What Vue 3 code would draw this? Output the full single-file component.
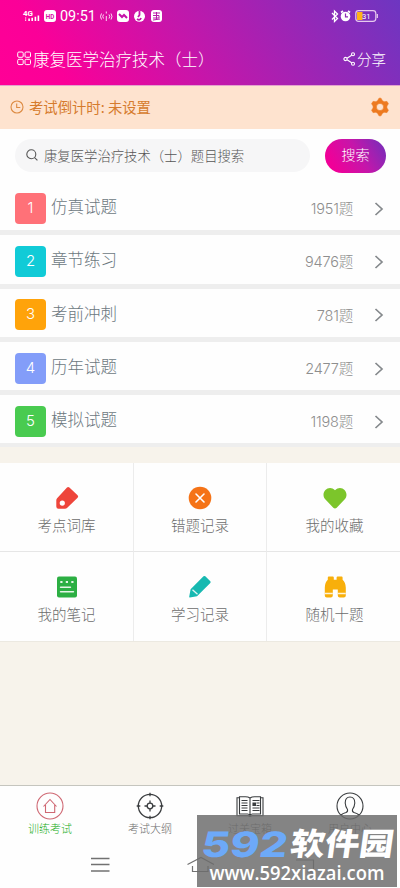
<script setup>
const rows = [
  { n: 1, name: '仿真试题', count: 1951, tone: 'red' },
  { n: 2, name: '章节练习', count: 9476, tone: 'cyan' },
  { n: 3, name: '考前冲刺', count: 781, tone: 'amber' },
  { n: 4, name: '历年试题', count: 2477, tone: 'blue' },
  { n: 5, name: '模拟试题', count: 1198, tone: 'green' },
]
const tools = [
  { id: 'tag', name: '考点词库' },
  { id: 'wrong', name: '错题记录' },
  { id: 'heart', name: '我的收藏' },
  { id: 'note', name: '我的笔记' },
  { id: 'pencil', name: '学习记录' },
  { id: 'binoculars', name: '随机十题' },
]
const tabs = [
  { id: 'home', name: '训练考试' },
  { id: 'target', name: '考试大纲' },
  { id: 'book', name: '过关宝箱' },
  { id: 'user', name: '用户中心' },
]
</script>

<template>
  <div class="screen">
    <header class="header">
      <svg class="status" width="400" height="32" viewBox="0 0 400 32">
        <g fill="#fff">
          <text x="23" y="15.5" font-size="7" font-weight="700" textLength="10" lengthAdjust="spacingAndGlyphs">4G</text>
          <path d="M25 17.500h1.200v1h-1.200zM25 19.500h1.200v1.200h-1.200zM28.300 18.500h1.600v2.500h-1.600zM31.400 17.800h1.600v3.200h-1.600zM34.600 16.800h1.600v4.200h-1.600zM37.600 15.500h1.600v5.500h-1.600z" />
          <rect x="44" y="10" width="12" height="12" rx="3" />
          <text x="60" y="21.300" font-size="14.500" textLength="36" lengthAdjust="spacingAndGlyphs">09:51</text>
          <rect x="117" y="10" width="12" height="12" rx="3" />
          <circle cx="139.500" cy="16.300" r="5.500" />
          <rect x="151" y="10" width="11" height="12" rx="3" />
        </g>
        <text x="45.800" y="18.800" font-size="7" font-weight="700" fill="#d90ba4" textLength="8.500" lengthAdjust="spacingAndGlyphs">HD</text>
        <g fill="none" stroke="#fff" stroke-width="1">
          <path d="M103.500 14.500q-1.500 2 0 4M109 14.500q1.500 2 0 4M101.500 13.500q-2 3 0 6M111 13.500q2 3 0 6M106.300 11.500v2M106.300 16v5" opacity=".85" />
          <path d="M332 13l5.500 5.500-3 3v-10.500l3 3-5.500 5.500" stroke-width="1.300" />
        </g>
        <path d="M119 14l3 3 2-2 3 3" fill="none" stroke="#c513a8" stroke-width="2" />
        <path d="M139.500 11v4l-1.500 2M137 19q3 2 4-1" fill="none" stroke="#c513a8" stroke-width="1.800" />
        <path d="M153 13h7M153 15.500h6v2.500h-6M156.500 12v7M153 20l7-1" fill="none" stroke="#b71aa9" stroke-width="1" />
        <circle cx="345.500" cy="16.500" r="4.800" fill="#fff" />
        <path d="M341 12.500l2-1.500M350 12.500l-2-1.500" stroke="#fff" stroke-width="1.700" />
        <path d="M345.500 13.500v3.300h2.500" fill="none" stroke="#8e2bb4" stroke-width="1.200" />
        <rect x="355.800" y="10.700" width="20" height="10.600" rx="2.800" fill="none" stroke="#e6c9ee" stroke-width="1.200" />
        <path d="M357 12h5.500v8h-5.500z" fill="#ffb214" />
        <path d="M377.300 14v4" stroke="#e6c9ee" stroke-width="1.300" />
        <text x="362" y="19" font-size="8" fill="#fff" textLength="8.500" lengthAdjust="spacingAndGlyphs">31</text>
      </svg>
      <div class="title-bar">
        <svg class="grid-icon" width="16" height="15" viewBox="0 0 16 15" fill="none" stroke="#fff" stroke-width="1">
          <rect x=".7" y="1" width="5.500" height="5.300" rx="1.200" /><rect x="8" y="1" width="5.500" height="5.300" rx="1.200" />
          <rect x=".7" y="8.300" width="5.500" height="5.300" rx="1.200" /><rect x="8" y="8.300" width="5.500" height="5.300" rx="1.200" />
        </svg>
        <span class="title">康复医学治疗技术（士）</span>
        <span class="share">
          <svg width="14" height="14" viewBox="0 0 14 14" fill="none" stroke="#fff" stroke-width="1.100">
            <circle cx="2.500" cy="7" r="1.600" /><circle cx="10" cy="2.300" r="1.500" /><circle cx="10" cy="11.700" r="1.500" />
            <path d="M4 6.200l4.700-3M4 7.800l4.700 3" />
          </svg>
          分享
        </span>
      </div>
    </header>

    <div class="notice">
      <svg width="14" height="14" viewBox="0 0 14 14" fill="none" stroke="#dd8b43" stroke-width="1.100">
        <circle cx="7" cy="7" r="6" /><path d="M6.700 3.500v4h3.600" />
      </svg>
      <span>考试倒计时: 未设置</span>
      <svg class="gear" width="20" height="20" viewBox="0 0 20 20">
        <path fill="#ed7a20" fill-rule="evenodd" stroke="#ed7a20" stroke-width=".6" stroke-linejoin="round" d="M9 1.200h2l1.400 2.500 1.700 1 2.900-.3 1.400 2.400-1.500 2.200v2l1.500 2.200-1.400 2.400-2.900-.3-1.700 1-1.400 2.500h-2l-1.400-2.500-1.700-1-2.900.3-1.400-2.400 1.500-2.200v-2l-1.500-2.200 1.400-2.400 2.900.3 1.700-1zM10 6.400a3.600 3.600 0 1 0 0 7.200a3.600 3.600 0 1 0 0-7.200z" />
      </svg>
    </div>

    <div class="search">
      <div class="field">
        <svg width="12" height="12" viewBox="0 0 12 12" fill="none" stroke="#555" stroke-width="1.100">
          <circle cx="5.300" cy="5.300" r="4.500" /><path d="M8.600 8.600l2.800 2.800" />
        </svg>
        <span>康复医学治疗技术（士）题目搜索</span>
      </div>
      <div class="button">搜索</div>
    </div>

    <div class="list">
      <div v-for="r in rows" :key="r.n" class="row">
        <span class="badge" :class="r.tone">{{ r.n }}</span>
        <span class="name">{{ r.name }}</span>
        <span class="count">{{ r.count }}题</span>
        <svg width="10" height="14" viewBox="0 0 10 14" fill="none" stroke="#85898c" stroke-width="1.700">
          <path d="M1.500 1l6.500 6-6.500 6" />
        </svg>
      </div>
    </div>

    <div class="tools">
      <div v-for="t in tools" :key="t.id" class="tool">
        <svg width="26" height="26" viewBox="0 0 26 26">
          <path v-if="t.id === 'tag'" fill="#ee453b" fill-rule="evenodd" d="M13 2.500q1.200-1 2.400 0l8.200 7.700q1.200 1.300 0 2.500l-10.600 10.300q-.8.800-2 .8h-6.500q-2.200 0-2.200-2.200v-6.500q0-1.100.8-1.900zM8.300 15.500a2.600 2.600 0 1 0 0 5.200a2.600 2.600 0 1 0 0-5.200z" />
          <template v-else-if="t.id === 'wrong'">
            <circle cx="13" cy="13" r="11.300" fill="#f57317" />
            <path d="M9 9l8 8M17 9l-8 8" stroke="#fff" stroke-width="1.600" stroke-linecap="round" />
          </template>
          <path v-else-if="t.id === 'heart'" fill="#7cc52b" d="M13 23.500q-.9 0-1.700-.8l-8.300-8.600c-5-6.500 3.500-15.400 10-8.900c6.500-6.500 15 2.400 10 8.900l-8.300 8.600q-.8.800-1.700.8z" />
          <template v-else-if="t.id === 'note'">
            <rect x="3" y="2.500" width="20" height="21" rx="2" fill="#2caf43" />
            <path d="M6.300 8h2.200M11.800 8h2.200M17.300 8h2.200" stroke="#e5f5e7" stroke-width="2" />
            <path d="M6.500 13.200h10M6.500 17.800h13" stroke="#e5f5e7" stroke-width="1.400" stroke-linecap="round" />
          </template>
          <template v-else-if="t.id === 'pencil'">
            <path fill="#17b9b1" d="M16.500 2.300q1-.8 1.800 0l5 5q.8.800 0 1.700l-13.300 13.200-7.200 1.300q-.8 0-.6-.8l1.400-7.400z" />
            <path d="M5.500 15.800l5 4.500" stroke="#e1f6f4" stroke-width="1.300" />
          </template>
          <template v-else>
            <path fill="#f8af0b" d="M5.800 3.500q0-1 1-1h4q1 0 1 1v2.300h2.800v-2.300q0-1 1-1h4q1 0 1 1v2.200q3 2.500 3.200 8v7.800q0 2-2 2h-4q-2 0-2-2v-6h-5v6q0 2-2 2h-4q-2 0-2-2v-7.800q.1-5.500 3-8z" />
            <path d="M2.800 19.500h8M15.800 19.500h8" stroke="#fff4d8" stroke-width="1.500" />
          </template>
        </svg>
        <span>{{ t.name }}</span>
      </div>
    </div>

    <div class="spacer"></div>

    <nav class="tabs">
      <div v-for="t in tabs" :key="t.id" class="tab" :class="{ active: t.id === 'home' }">
        <svg width="28" height="28" viewBox="0 0 28 28" fill="none" stroke="#3a3d3f" stroke-width="1.100">
          <g v-if="t.id === 'home'" stroke="#cf6873">
            <circle cx="14" cy="14" r="13" /><path d="M7.500 14.500l6.500-7 6.500 7M9.500 13v7.500h9.200v-7.500" />
          </g>
          <g v-else-if="t.id === 'target'" stroke-width="1.300">
            <circle cx="14" cy="14" r="11.700" /><circle cx="14" cy="14" r="2.800" />
            <path d="M14 .7v3.600M14 23.700v3.600M.7 14h3.600M23.700 14h3.600M14 8.500v2.500M14 17v2.500M8.500 14h2.500M17 14h2.500" />
          </g>
          <g v-else-if="t.id === 'book'" stroke-width="1.100">
            <path d="M14 6q-2-1.400-5-1.300h-5.500v1h-2.500v18h11l2 .8 2-.8h11v-18h-2.500v-1h-5.500q-3-.1-5 1.300v18M3.500 6v16h8q1.500 0 2.500 1.300 1-1.300 2.500-1.300h8v-16" />
            <path d="M5.500 8.500h6M5.500 11h6M5.500 13.500h6M5.500 16h6M5.500 18.500h6M16.500 8.500h7M20.500 11h3M20.500 13.500h3M16.500 16h7M16.500 18.500h7" />
            <path d="M17 11h2.500v2.500h-2.500z" fill="#3a3d3f" />
          </g>
          <g v-else stroke-width="1.100">
            <circle cx="14" cy="14" r="13" />
            <path d="M5 23q1.500-1.500 5-2.500 2-.8 1.500-3-2-2.500-2.300-6.500 0-6 4.800-6t4.800 6q-.3 4-2.300 6.500-.5 2.200 1.500 3 3.500 1 5 2.500" />
          </g>
        </svg>
        <span>{{ t.name }}</span>
      </div>
    </nav>

    <div class="system-nav">
      <svg width="400" height="45" viewBox="0 0 400 45" fill="none" stroke="#717171" stroke-width="1.500">
        <path d="M91 15.500h18.500M91 21.500h18.500M91 28h18.500" />
        <path d="M187.500 21.500l13.500-7 13 7M192.500 23v5.500h15.500v-5.500" stroke-width="1.200" />
        <path d="M296 17h17.500v12h-6" stroke-width="1.200" />
      </svg>
    </div>

    <div class="watermark">
      <svg width="200" height="72" viewBox="0 0 200 72">
        <g transform="skewX(-8)">
          <text class="brand-num" x="9" y="42" font-size="35" textLength="86" lengthAdjust="spacingAndGlyphs">592</text>
          <text class="brand-name" x="98" y="40" font-size="31" textLength="103" lengthAdjust="spacingAndGlyphs">软件园</text>
        </g>
        <text class="brand-url" x="12.500" y="64.500" font-size="19" textLength="175" lengthAdjust="spacingAndGlyphs">www.592xiazai.com</text>
      </svg>
    </div>
  </div>
</template>

<style>
body {
  background: #fff;
}
</style>

<style scoped>
.screen {
  position: relative;
  display: flex;
  flex-direction: column;
  width: 400px;
  height: 888px;
  overflow: hidden;
  background: #f7f3eb;
  font-family: 'Noto Sans CJK SC', sans-serif;
  font-weight: 300;
  color: #6c6c6c;
}
.screen svg {
  display: block;
  flex: none;
}
.header {
  box-sizing: border-box;
  height: 86px;
  background: linear-gradient(58deg, #ff0096 0%, #fb0098 15%, #c516aa 47%, #6d36c1 100%);
  border-bottom: 1px solid #e3a2cd;
}
.status {
  font-family: Roboto, sans-serif;
  font-weight: 400;
}
.title-bar {
  display: flex;
  align-items: center;
  height: 53px;
  padding: 0 14px 0 17px;
  color: #fff;
}
.title {
  font-size: 16.5px;
}
.share {
  display: flex;
  align-items: center;
  margin-left: auto;
  font-size: 14.5px;
}
.notice {
  display: flex;
  align-items: center;
  gap: 5px;
  box-sizing: border-box;
  height: 43px;
  padding: 0 10px 2px;
  background: #fee3cf;
  color: #d67b2d;
  font-size: 14.35px;
  font-weight: 400;
}
.gear {
  margin-left: auto;
}
.search {
  display: flex;
  align-items: center;
  justify-content: space-between;
  box-sizing: border-box;
  height: 53px;
  padding: 0 14px 0 15px;
  background: #fefefe;
}
.field {
  display: flex;
  align-items: center;
  gap: 6px;
  box-sizing: border-box;
  width: 295px;
  height: 33px;
  padding: 0 0 1px 11px;
  border-radius: 17px;
  background: #f6f6f7;
  font-size: 13.35px;
  color: #555;
}
.button {
  display: flex;
  align-items: center;
  justify-content: center;
  box-sizing: border-box;
  width: 61px;
  height: 34px;
  padding-bottom: 3px;
  border-radius: 17px;
  background: linear-gradient(60deg, #f00098 15%, #c516aa 55%, #702fbb 100%);
  color: #fff;
  font-size: 14px;
}
.list {
  background: #fefefe;
}
.row {
  display: flex;
  align-items: center;
  box-sizing: border-box;
  height: 53.3px;
  padding: 0 16px 0 15px;
  border-bottom: 5px solid #eee;
}
.row:last-child {
  height: 52px;
  border-bottom-width: 4px;
}
.badge {
  display: flex;
  align-items: center;
  justify-content: center;
  width: 31px;
  height: 31px;
  margin-top: 4px;
  border-radius: 4px;
  padding-bottom: 2px;
  box-sizing: border-box;
  color: #fff;
  font-family: Inter, sans-serif;
  font-size: 15px;
}
.badge.red { background: #ff7178; }
.badge.cyan { background: #11cbd7; }
.badge.amber { background: #ffa30a; }
.badge.blue { background: #839df9; }
.badge.green { background: #49cb50; }
.name {
  margin-left: 5px;
  font-size: 16.5px;
  color: #6c787e;
}
.count {
  margin: 3px 21px 0 auto;
  font-family: Inter, 'Noto Sans CJK SC', sans-serif;
  font-size: 14.5px;
  letter-spacing: -0.2px;
  color: #8e8e8e;
}
.row svg {
  margin-top: 5px;
}
.tools {
  display: grid;
  grid-template-columns: 134px 133px 133px;
  grid-auto-rows: 89px;
  margin-top: 15.8px;
  background: #fefefe;
  border-bottom: 1px solid #ece9e1;
}
.tool {
  display: flex;
  flex-direction: column;
  align-items: center;
  gap: 4.5px;
  box-sizing: border-box;
  padding-top: 22px;
  border-right: 1px solid #ececec;
  border-bottom: 1px solid #e6e6e6;
  font-size: 14.5px;
  line-height: 20px;
}
.tool:nth-child(3n) {
  padding-left: 2px;
  border-right: 0;
}
.tool:nth-child(n + 4) {
  border-bottom: 0;
}
.spacer {
  flex: 1;
}
.tabs {
  display: grid;
  grid-template-columns: repeat(4, 1fr);
  box-sizing: border-box;
  height: 58px;
  border-top: 1px solid #c5c5be;
  background: #fefefe;
}
.tab {
  display: flex;
  flex-direction: column;
  align-items: center;
  padding-top: 6px;
  font-size: 11px;
  line-height: 17px;
}
.tab.active span {
  color: #21ad21;
}
.system-nav {
  height: 45px;
  background: #fefefe;
}
.watermark {
  position: absolute;
  left: 197px;
  top: 815px;
  width: 200px;
  height: 72px;
  background: rgba(108, 108, 108, 0.84);
}
.brand-num {
  font-family: Inter, sans-serif;
  font-weight: 800;
  fill: #6da9f8;
}
.brand-name {
  font-family: 'Noto Sans CJK SC', sans-serif;
  font-weight: 900;
  fill: #fff;
}
.brand-url {
  font-family: 'Open Sans', sans-serif;
  font-weight: 600;
  fill: #fff;
}
</style>
